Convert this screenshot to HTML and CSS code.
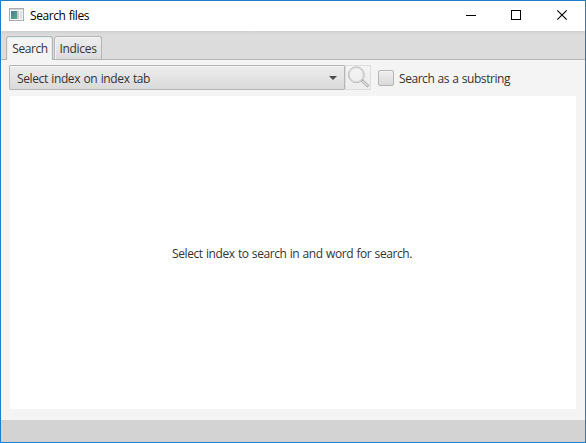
FILE: index.html
```html
<!DOCTYPE html>
<html lang="en">
<head>
<meta charset="utf-8">
<title>Search files</title>
<link rel="stylesheet" href="styles.css">
</head>
<body>
<div class="window">
  <header class="titlebar">
    <svg class="app-icon" width="16" height="14" viewBox="0 0 16 14">
      <defs><linearGradient id="pane" x1="0" y1="0" x2="1" y2="1"><stop offset="0" stop-color="#4f78a8"/><stop offset="1" stop-color="#50ad78"/></linearGradient></defs>
      <rect x=".5" y=".5" width="14" height="12" fill="#f4f4f4" stroke="#a9adb1"/>
      <path d="M1 1.5h13" stroke="#d4d7da"/>
      <rect x="2" y="3" width="6" height="8" fill="url(#pane)"/>
      <rect x="8" y="3" width="2" height="8" fill="#c2c8cc"/>
      <rect x="11" y="3" width="2" height="8" fill="#dcdfe1"/>
    </svg>
    <span class="title t-title">Search files</span>
    <div class="controls">
      <svg width="45" height="30" viewBox="0 0 45 30"><path d="M15 14.5h10" stroke="#000"/></svg>
      <svg width="45" height="30" viewBox="0 0 45 30"><rect x="15.5" y="9.5" width="9" height="9" fill="none" stroke="#000"/></svg>
      <svg width="44" height="30" viewBox="0 0 44 30"><path d="M16.3 9.3l9.4 9.4M25.7 9.3l-9.4 9.4" stroke="#000" stroke-width="1.15"/></svg>
    </div>
  </header>
  <nav class="tabs">
    <div class="tab tab-active"><span class="t-search">Search</span></div>
    <div class="tab"><span class="t-indices">Indices</span></div>
  </nav>
  <main class="content">
    <div class="toolbar">
      <div class="combo"><span class="t-combo">Select index on index tab</span><svg width="8" height="4" viewBox="0 0 8 4"><path d="M0 0h8L4 4z" fill="#4b4b4b"/></svg></div>
      <div class="search-button"><svg width="24" height="23" viewBox="0 0 24 23" fill="none"><circle cx="9.3" cy="8.8" r="8" stroke="#b0b0b0" stroke-width=".8"/><circle cx="9.3" cy="8.8" r="6.9" stroke="#c0c0c0" stroke-width=".6"/><path d="M14.7 14.2l6.6 6.2" stroke="#aaa" stroke-width="3"/><path d="M15.3 14.8l5.4 5" stroke="#e6e6e6" stroke-width="1.2"/></svg></div>
      <div class="checkbox"></div>
      <span class="t-check">Search as a substring</span>
    </div>
    <section class="results"><span class="t-empty">Select index to search in and word for search.</span></section>
  </main>
  <footer class="status"></footer>
</div>
</body>
</html>
```
FILE: styles.css
```css
* { box-sizing: border-box; }
body { margin: 0; font: 12px/16px "Open Sans", sans-serif; color: #333; overflow: hidden; }
svg { display: block; flex: none; }
span { white-space: nowrap; word-spacing: .6px; }
.window { width: 586px; height: 443px; border: 1px solid #1d7fcc; background: #f4f4f4; display: flex; flex-direction: column; }
.titlebar { height: 30px; flex: none; background: #fff; display: flex; align-items: center; padding-left: 8px; color: #000; }
.app-icon { margin-top: -2px; }
.title { margin-left: 5px; }
.t-title { letter-spacing: -.44px; }
.t-search { letter-spacing: -.45px; padding: 2px 0 0 1px; }
.t-indices { letter-spacing: -.3px; padding-top: 2px; }
.t-combo { letter-spacing: -.37px; padding-top: 2px; }
.t-check { letter-spacing: -.45px; padding-top: 2px; }
.t-empty { letter-spacing: -.42px; padding: 2px 2px 0 0; }
.controls { margin-left: auto; display: flex; }
.tabs { height: 29px; flex: none; padding: 5px 5px 0; display: flex; gap: 1px; background: linear-gradient(#cfd1d1, #dcdcdc 4px, #dcdcdc); border-bottom: 1px solid #b5b5b5; }
.tab { width: 48px; height: 23px; border: 1px solid #b5b5b5; border-bottom: 0; border-radius: 3px 3px 0 0; background: linear-gradient(#eee, #dbdbdb); box-shadow: inset 1px 1px #f5f5f5; display: flex; align-items: center; justify-content: center; }
.tab-active { width: 47px; height: 24px; background: #f4f4f4; box-shadow: inset 1px 1px #dceff1, inset -1px 0 #dceff1; padding-bottom: 1px; }
.content { height: 360px; flex: none; padding: 5px 9px 11px 8px; }
.toolbar { display: flex; align-items: center; height: 25px; }
.combo { width: 336px; height: 25px; border: 1px solid #b5b5b5; border-radius: 1px; background: linear-gradient(#ededed, #dadada); box-shadow: inset 0 1px #f7f7f7; display: flex; align-items: center; justify-content: space-between; padding: 0 7px; }
.search-button { width: 26px; height: 25px; border: 1px solid #dedede; background: linear-gradient(#f4f4f4, #ececec); display: flex; padding-left: 1px; }
.checkbox { width: 16px; height: 16px; margin: 1px 5px 0 7px; border: 1px solid #b5b5b5; border-radius: 2px; background: linear-gradient(#eee, #dadada); box-shadow: inset 0 1px #f6f6f6; }
.results { height: 313px; margin: 6px 0 0 1px; background: #fff; display: flex; align-items: center; justify-content: center; }
.status { flex: 1; background: #d3d3d3; }
```
